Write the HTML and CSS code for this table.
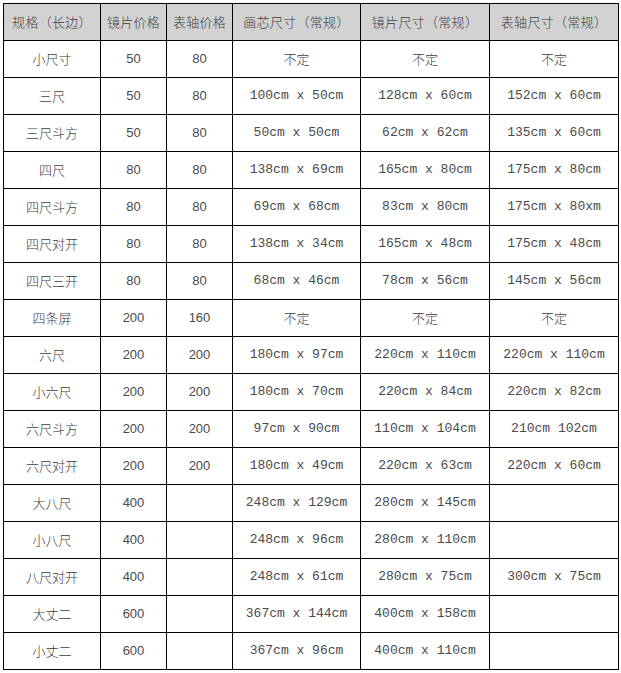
FILE: index.html
```html
<!DOCTYPE html>
<html lang="zh">
<head>
<meta charset="utf-8">
<link rel="stylesheet" href="styles.css">
</head>
<body>
<table class="spec">
<colgroup>
<col class="c1"><col class="c2"><col class="c3"><col class="c4"><col class="c5"><col class="c6">
</colgroup>
<thead>
<tr><th>规格（长边）</th><th>镜片价格</th><th>表轴价格</th><th>画芯尺寸（常规）</th><th>镜片尺寸（常规）</th><th>表轴尺寸（常规）</th></tr>
</thead>
<tbody>
<tr><td>小尺寸</td><td class="n">50</td><td class="n">80</td><td>不定</td><td>不定</td><td>不定</td></tr>
<tr><td>三尺</td><td class="n">50</td><td class="n">80</td><td class="m">100cm x 50cm</td><td class="m">128cm x 60cm</td><td class="m">152cm x 60cm</td></tr>
<tr><td>三尺斗方</td><td class="n">50</td><td class="n">80</td><td class="m">50cm x 50cm</td><td class="m">62cm x 62cm</td><td class="m">135cm x 60cm</td></tr>
<tr><td>四尺</td><td class="n">80</td><td class="n">80</td><td class="m">138cm x 69cm</td><td class="m">165cm x 80cm</td><td class="m">175cm x 80cm</td></tr>
<tr><td>四尺斗方</td><td class="n">80</td><td class="n">80</td><td class="m">69cm x 68cm</td><td class="m">83cm x 80cm</td><td class="m">175cm x 80xm</td></tr>
<tr><td>四尺对开</td><td class="n">80</td><td class="n">80</td><td class="m">138cm x 34cm</td><td class="m">165cm x 48cm</td><td class="m">175cm x 48cm</td></tr>
<tr><td>四尺三开</td><td class="n">80</td><td class="n">80</td><td class="m">68cm x 46cm</td><td class="m">78cm x 56cm</td><td class="m">145cm x 56cm</td></tr>
<tr><td>四条屏</td><td class="n">200</td><td class="n">160</td><td>不定</td><td>不定</td><td>不定</td></tr>
<tr><td>六尺</td><td class="n">200</td><td class="n">200</td><td class="m">180cm x 97cm</td><td class="m">220cm x 110cm</td><td class="m">220cm x 110cm</td></tr>
<tr><td>小六尺</td><td class="n">200</td><td class="n">200</td><td class="m">180cm x 70cm</td><td class="m">220cm x 84cm</td><td class="m">220cm x 82cm</td></tr>
<tr><td>六尺斗方</td><td class="n">200</td><td class="n">200</td><td class="m">97cm x 90cm</td><td class="m">110cm x 104cm</td><td class="m">210cm 102cm</td></tr>
<tr><td>六尺对开</td><td class="n">200</td><td class="n">200</td><td class="m">180cm x 49cm</td><td class="m">220cm x 63cm</td><td class="m">220cm x 60cm</td></tr>
<tr><td>大八尺</td><td class="n">400</td><td></td><td class="m">248cm x 129cm</td><td class="m">280cm x 145cm</td><td></td></tr>
<tr><td>小八尺</td><td class="n">400</td><td></td><td class="m">248cm x 96cm</td><td class="m">280cm x 110cm</td><td></td></tr>
<tr><td>八尺对开</td><td class="n">400</td><td></td><td class="m">248cm x 61cm</td><td class="m">280cm x 75cm</td><td class="m">300cm x 75cm</td></tr>
<tr><td>大丈二</td><td class="n">600</td><td></td><td class="m">367cm x 144cm</td><td class="m">400cm x 158cm</td><td></td></tr>
<tr><td>小丈二</td><td class="n">600</td><td></td><td class="m">367cm x 96cm</td><td class="m">400cm x 110cm</td><td></td></tr>
</tbody>
</table>
</body>
</html>
```
FILE: styles.css
```css
html, body {
  margin: 0;
  padding: 0;
  background: #ffffff;
}
body {
  padding: 3px;
  font-family: "Noto Sans CJK SC", "Liberation Sans", sans-serif;
  color: #3c3c3c;
}
.spec {
  border-collapse: collapse;
  table-layout: fixed;
  width: 615px;
  font-size: 13px;
}
.c1 { width: 97px; }
.c2 { width: 66px; }
.c3 { width: 66px; }
.c4 { width: 128px; }
.c5 { width: 129px; }
.c6 { width: 129px; }
.spec tr {
  height: 37px;
}
.spec th,
.spec td {
  border: 1px solid #000000;
  padding: 0;
  text-align: center;
  vertical-align: middle;
  font-weight: 300;
  line-height: 16px;
  white-space: nowrap;
}
.spec th {
  background: #d2d2d2;
  color: #3c3c3c;
  letter-spacing: 0.3px;
}
.spec td.n {
  font-family: "Liberation Sans", sans-serif;
  font-weight: normal;
  color: #4a4a4a;
}
.spec td.m {
  font-family: "Liberation Mono", monospace;
  font-weight: normal;
  color: #4a4a4a;
}
```
